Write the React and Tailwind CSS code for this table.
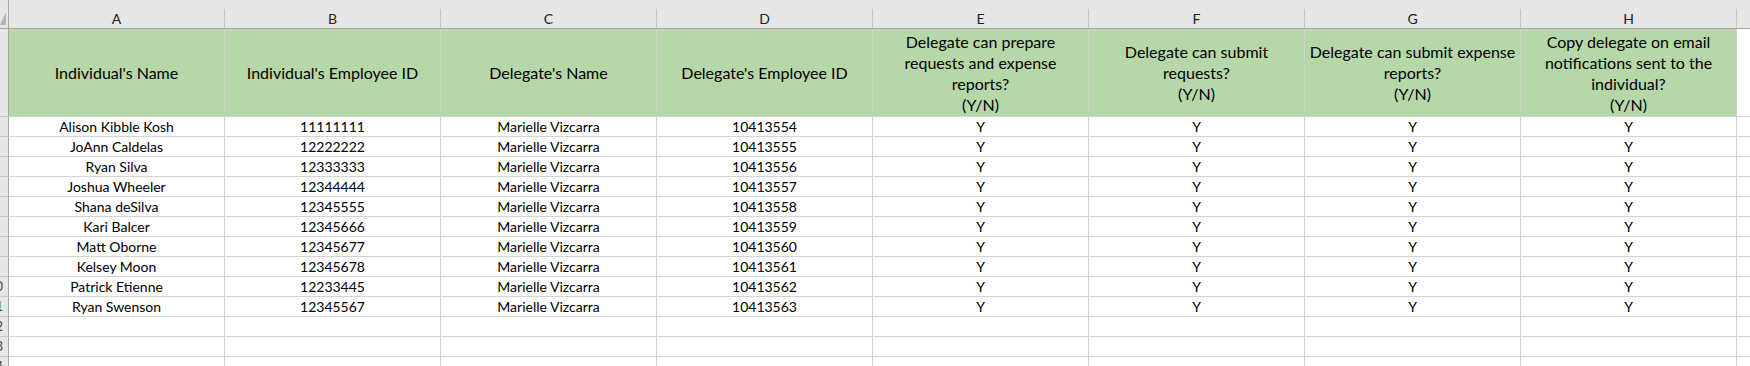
const COLS = ['A', 'B', 'C', 'D', 'E', 'F', 'G', 'H']

const HEADERS = [
  ["Individual's Name"],
  ["Individual's Employee ID"],
  ["Delegate's Name"],
  ["Delegate's Employee ID"],
  ['Delegate can prepare', 'requests and expense', 'reports?', '(Y/N)'],
  ['Delegate can submit', 'requests?', '(Y/N)'],
  ['Delegate can submit expense', 'reports?', '(Y/N)'],
  ['Copy delegate on email', 'notifications sent to the', 'individual?', '(Y/N)'],
]

const PEOPLE = [
  ['Alison Kibble Kosh', '11111111', '10413554'],
  ['JoAnn Caldelas', '12222222', '10413555'],
  ['Ryan Silva', '12333333', '10413556'],
  ['Joshua Wheeler', '12344444', '10413557'],
  ['Shana deSilva', '12345555', '10413558'],
  ['Kari Balcer', '12345666', '10413559'],
  ['Matt Oborne', '12345677', '10413560'],
  ['Kelsey Moon', '12345678', '10413561'],
  ['Patrick Etienne', '12233445', '10413562'],
  ['Ryan Swenson', '12345567', '10413563'],
]

function RowHead({ n, tall }) {
  return (
    <div className={`w-[9px] shrink-0 overflow-hidden bg-[#e6e6e6] border-r border-b border-r-[#a6a6a6] border-b-[#c8c8c8] ${tall ? 'h-[88px]' : 'h-[20px]'}`}>
      <div className="ml-[-17px] w-[25px] text-center text-[13px] leading-[19px] text-[#444]">{n}</div>
    </div>
  )
}

function Cell({ children }) {
  return (
    <div className="w-[216px] shrink-0 h-[20px] border-r border-b border-[#d4d4d4] text-center text-[14px] leading-[19px] text-black">
      {children}
    </div>
  )
}

export default function App() {
  const rows = PEOPLE.map(([name, id, did]) => [name, id, 'Marielle Vizcarra', did, 'Y', 'Y', 'Y', 'Y'])
  rows.push(Array(8).fill(''), Array(8).fill(''), Array(8).fill(''))

  return (
    <div className="w-[1750px] h-[366px] overflow-hidden bg-white font-['Lato',sans-serif]">
      {/* column letters */}
      <div className="flex h-[29px] bg-[#e6e6e6] border-b border-[#a6a6a6]">
        <div className="w-[9px] shrink-0 relative border-r border-[#a6a6a6]">
          <svg className="absolute left-0 top-[12px]" width="6" height="13" viewBox="0 0 6 13">
            <polygon points="6,0 6,13 0,13" fill="#b4b4b4" />
          </svg>
        </div>
        {COLS.map((c) => (
          <div key={c} className="w-[216px] shrink-0 flex flex-col">
            <div className="h-[9px]" />
            <div className="flex-1 border-r border-[#c6c6c6] text-center text-[14px] leading-[19px] text-[#222]">{c}</div>
          </div>
        ))}
        <div className="flex-1 flex flex-col">
          <div className="h-[9px]" />
          <div className="flex-1" />
        </div>
      </div>

      {/* header row */}
      <div className="flex">
        <RowHead n="1" tall />
        {HEADERS.map((lines, i) => (
          <div key={i} className="w-[216px] shrink-0 h-[88px] bg-[#b6d7a8] border-r border-b border-[#d0d0d0] flex flex-col items-center justify-center text-center text-[16px] leading-[21px] text-black">
            {lines.map((l) => <div key={l} className="whitespace-nowrap">{l}</div>)}
          </div>
        ))}
        <div className="flex-1 h-[88px] border-b border-[#d4d4d4]" />
      </div>

      {rows.map((r, i) => (
        <div key={i} className="flex">
          <RowHead n={i + 2} />
          {r.map((v, j) => <Cell key={j}>{v}</Cell>)}
          <div className="flex-1 h-[20px] border-b border-[#d4d4d4]" />
        </div>
      ))}
    </div>
  )
}
